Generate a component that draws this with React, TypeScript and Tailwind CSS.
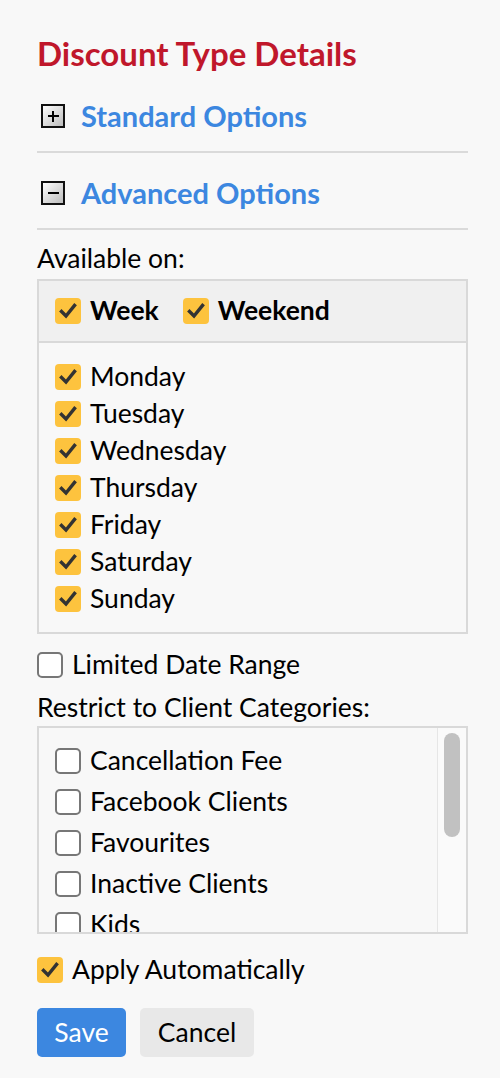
import React from "react";

const days = ["Monday", "Tuesday", "Wednesday", "Thursday", "Friday", "Saturday", "Sunday"];
const categories = ["Cancellation Fee", "Facebook Clients", "Favourites", "Inactive Clients", "Kids"];

const Check = ({ checked }: { checked: boolean }) =>
	checked ? (
		<span className="flex h-[26px] w-[26px] shrink-0 items-center justify-center rounded-[4px] bg-[#fdc33e]">
			<svg width="26" height="26" viewBox="0 0 26 26" fill="none">
				<path d="M6.5 13.5 L11 18 L19.5 7.5" stroke="#333" strokeWidth="3.4" strokeLinecap="square" strokeLinejoin="miter" />
			</svg>
		</span>
	) : (
		<span className="block h-[26px] w-[26px] shrink-0 rounded-[5px] border-2 border-[#777] bg-white" />
	);

const ToggleIcon = ({ open }: { open: boolean }) => (
	<span className="relative flex h-[24px] w-[24px] shrink-0 items-center justify-center border-2 border-[#111] bg-gradient-to-br from-white to-[#bdbdbd]">
		<span className="absolute h-[2px] w-[11px] bg-black" />
		{!open && <span className="absolute h-[11px] w-[2px] bg-black" />}
	</span>
);

const Section = ({ title, open }: { title: string; open: boolean }) => (
	<div className="border-b-2 border-[#dadada] pt-[14px] pb-[9px]">
		<div className="flex h-[52px] items-center gap-[16px] pl-[4px]">
			<ToggleIcon open={open} />
			<span className="text-[29px] font-bold text-[#3c87e0]">{title}</span>
		</div>
	</div>
);

export default function App() {
	return (
		<div className="min-h-screen bg-[#f8f8f8] pl-[37px] pr-[32px] pt-[30px] pb-[20px] text-[26.5px] text-black" style={{ fontFamily: "Lato, 'Liberation Sans', sans-serif" }}>
			<h1 className="text-[33px] leading-[46px] font-bold text-[#c0172b]">Discount Type Details</h1>

			<Section title="Standard Options" open={false} />
			<Section title="Advanced Options" open={true} />

			<div className="mt-[10px] leading-[36px]">Available on:</div>
			<div className="mt-[3px] border-2 border-[#d9d9d9]">
				<div className="flex h-[62px] items-center border-b-2 border-[#d9d9d9] bg-[#f0f0f0] pl-[16px]">
					<label className="flex items-center gap-[9px]">
						<Check checked />
						<span className="font-bold">Week</span>
					</label>
					<label className="ml-[24px] flex items-center gap-[9px]">
						<Check checked />
						<span className="font-bold">Weekend</span>
					</label>
				</div>
				<div className="pt-[15px] pb-[15px] pl-[16px]">
					{days.map((d) => (
						<label key={d} className="flex h-[37px] items-center gap-[9px]">
							<Check checked />
							<span>{d}</span>
						</label>
					))}
				</div>
			</div>

			<label className="mt-[12px] flex h-[37px] items-center gap-[9px]">
				<Check checked={false} />
				<span>Limited Date Range</span>
			</label>

			<div className="mt-[6px] leading-[37px]">Restrict to Client Categories:</div>
			<div className="flex h-[208px] border-2 border-[#d9d9d9]">
				<div className="flex-1 overflow-hidden pt-[12px] pl-[16px]">
					{categories.map((c) => (
						<label key={c} className="flex h-[41px] items-center gap-[9px]">
							<Check checked={false} />
							<span>{c}</span>
						</label>
					))}
				</div>
				<div className="w-[29px] border-l border-[#e6e6e6] bg-[#fafafa] px-[6px] pt-[5px]">
					<div className="h-[104px] w-[16px] rounded-full bg-[#c1c1c1]" />
				</div>
			</div>

			<label className="mt-[17px] flex h-[37px] items-center gap-[9px]">
				<Check checked />
				<span>Apply Automatically</span>
			</label>

			<div className="mt-[20px] flex gap-[14px]">
				<button className="h-[49px] w-[89px] rounded-[5px] bg-[#3c87e0] text-white">Save</button>
				<button className="h-[49px] w-[114px] rounded-[5px] bg-[#e8e8e8] text-black">Cancel</button>
			</div>
		</div>
	);
}
